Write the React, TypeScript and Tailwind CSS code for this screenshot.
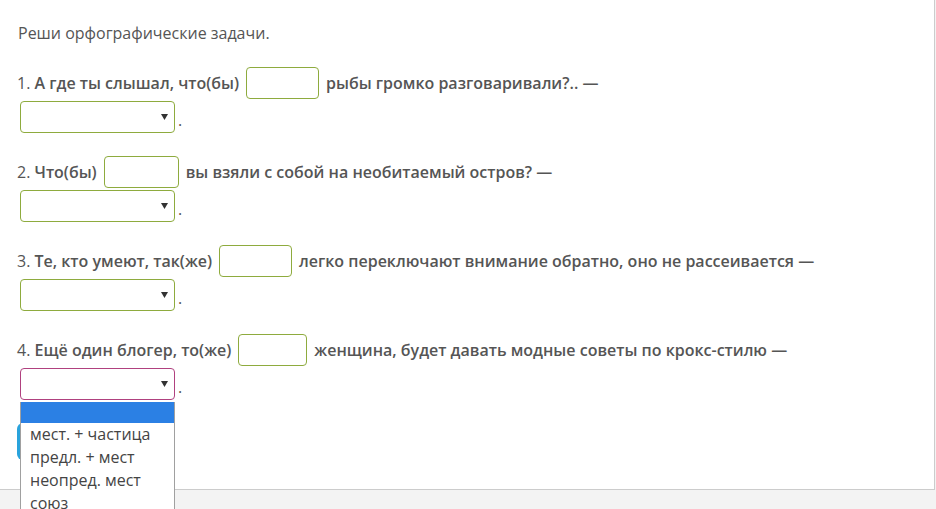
import React from "react";

const items = [
  { n: "1.", a: "А где ты слышал, что(бы)", b: "рыбы громко разговаривали?.. —", w: 73 },
  { n: "2.", a: "Что(бы)", b: "вы взяли с собой на необитаемый остров? —", w: 75 },
  { n: "3.", a: "Те, кто умеют, так(же)", b: "легко переключают внимание обратно, оно не рассеивается —", w: 73 },
  { n: "4.", a: "Ещё один блогер, то(же)", b: "женщина, будет давать модные советы по крокс-стилю —", w: 69 },
];

function Select({ active }: { active?: boolean }) {
  return (
    <div
      className={
        "relative w-[155px] h-[32px] rounded-[4px] bg-white border " +
        (active ? "border-[#b0417f]" : "border-[#8eab3e]")
      }
    >
      <svg className="absolute right-[6px] top-[12px]" width="7" height="6" viewBox="0 0 7 6">
        <path d="M0 0 H7 L3.5 6 Z" fill="#333" />
      </svg>
    </div>
  );
}

export default function App() {
  return (
    <div
      className="relative w-[936px] h-[509px] overflow-hidden bg-[#f3f3f3] text-[#555555]"
      style={{ fontFamily: '"Open Sans", "Noto Sans", sans-serif' }}
    >
      <div className="w-[935px] h-[490px] bg-white border-r border-b border-[#cccccc] pl-[17px] pt-[22px]">
        <div className="text-[16px] leading-[22px] pl-[1px]">Реши орфографические задачи.</div>
        <div className="mt-[23px]">
          {items.map((it, i) => (
            <div key={i} className="mb-[23px]">
              <div className="flex items-center h-[32px] text-[16px] whitespace-nowrap">
                <span>{it.n}&nbsp;</span>
                <span className="font-semibold">{it.a}</span>
                <div
                  className="mx-[7px] h-[32px] rounded-[4px] border border-[#8eab3e] bg-white"
                  style={{ width: it.w }}
                />
                <span className="font-semibold">{it.b}</span>
              </div>
              <div className="mt-[2px] flex items-center ml-[3px]">
                {i === 3 ? (
                  <div className="relative">
                    <Select active />
                    <div className="absolute left-0 top-[34px] w-[155px] bg-white border-x border-[#a0a0a0] z-10 text-[16px] leading-[23px] text-[#444444]">
                      <div className="h-[21px] bg-[#2b80e4]" />
                      <div className="pl-[9px]">мест. + частица</div>
                      <div className="pl-[9px]">предл. + мест</div>
                      <div className="pl-[9px]">неопред. мест</div>
                      <div className="pl-[9px]">союз</div>
                    </div>
                  </div>
                ) : (
                  <Select />
                )}
                <span className="ml-[3px] mt-[6px] text-[16px] leading-[20px]">.</span>
              </div>
            </div>
          ))}
        </div>
        <div className="w-[120px] h-[37px] rounded-[6px] bg-[#29a3dc]" />
      </div>
    </div>
  );
}
